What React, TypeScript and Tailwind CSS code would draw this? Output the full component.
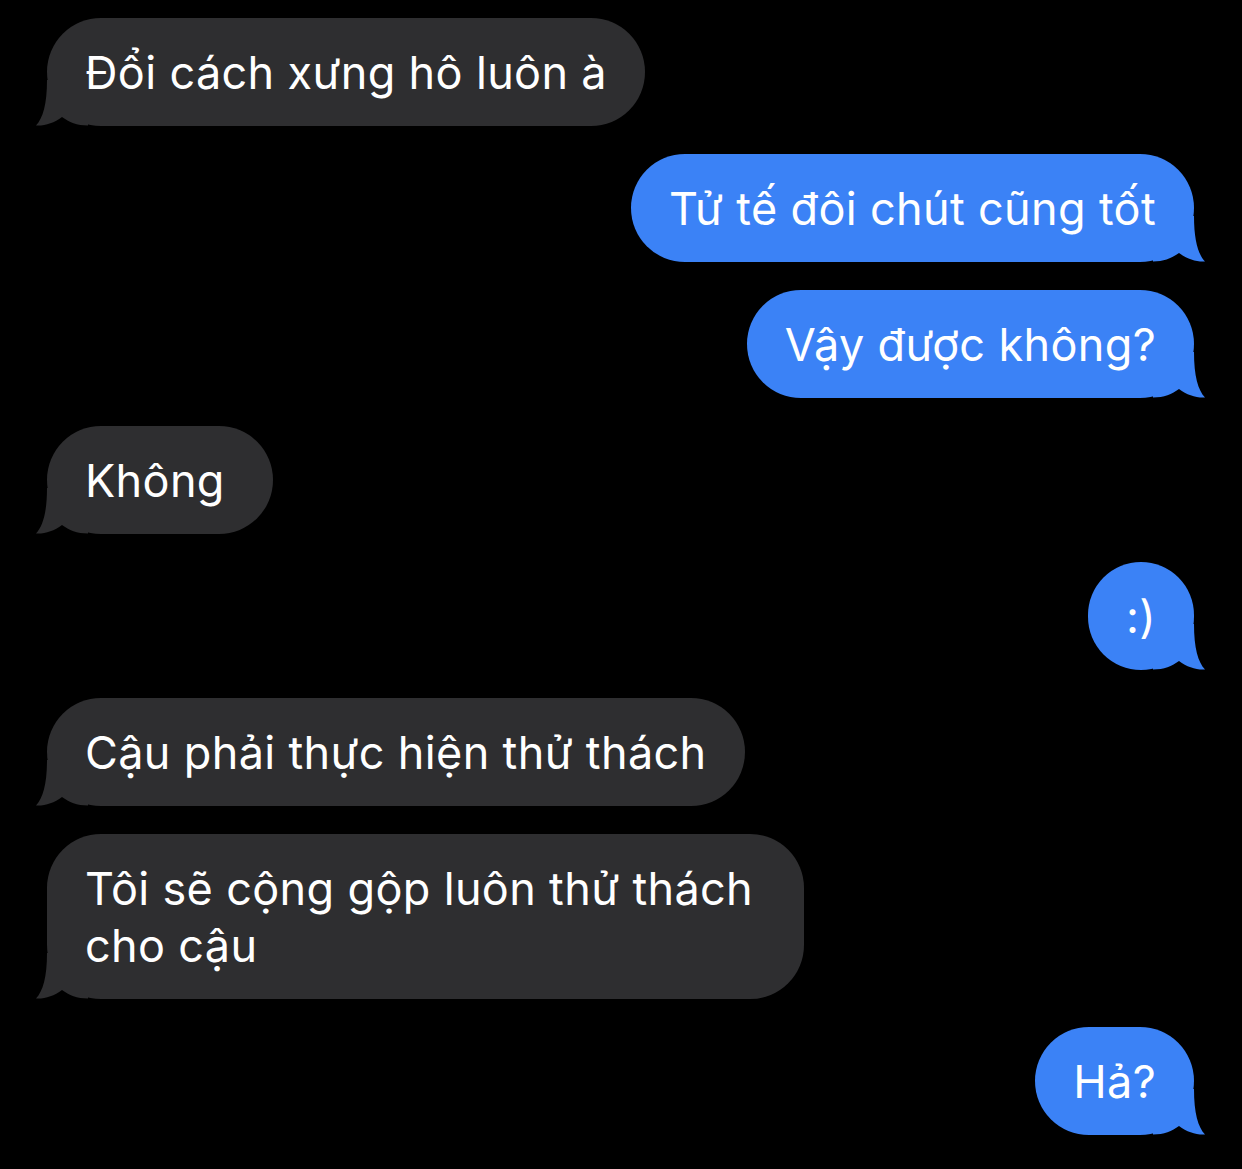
import type { ReactNode } from "react";

type Msg = { from: "them" | "me"; text: ReactNode };

const messages: Msg[] = [
  { from: "them", text: "Đổi cách xưng hô luôn à" },
  { from: "me", text: "Tử tế đôi chút cũng tốt" },
  { from: "me", text: "Vậy được không?" },
  { from: "them", text: "Không" },
  { from: "me", text: ":)" },
  { from: "them", text: "Cậu phải thực hiện thử thách" },
  { from: "them", text: "Tôi sẽ cộng gộp luôn thử thách cho cậu" },
  { from: "me", text: "Hả?" },
];

function Tail({ mine }: { mine: boolean }) {
  return (
    <svg
      viewBox="0 0 52 46"
      className={`absolute bottom-0 h-[46px] w-[52px] ${
        mine ? "right-[-11px] scale-x-[-1]" : "left-[-11px]"
      }`}
    >
      <path
        d="M11 0 C11 24 7 38 0 45.5 C9 46 18 43 26 37 C33 42 41 45.5 52 45.5 L52 0 Z"
        className={mine ? "fill-[#3b82f6]" : "fill-[#2e2e30]"}
      />
    </svg>
  );
}

function Bubble({ msg }: { msg: Msg }) {
  const mine = msg.from === "me";
  return (
    <div className={`flex ${mine ? "justify-end" : "justify-start"}`}>
      <div
        className={`relative max-w-[757px] rounded-[54px] px-[38px] py-[25.5px] text-[45px] leading-[57px] tracking-[0.35px] text-white ${
          mine ? "bg-[#3b82f6]" : "min-w-[226px] bg-[#2e2e30]"
        }`}
      >
        <Tail mine={mine} />
        <span className="relative">{msg.text}</span>
      </div>
    </div>
  );
}

export default function App() {
  return (
    <div
      className="min-h-[1169px] w-full bg-black pt-[18px] pl-[47px] pr-[48px]"
      style={{ fontFamily: "Inter, 'Noto Sans', 'Liberation Sans', sans-serif" }}
    >
      <div className="flex flex-col gap-[28px]">
        {messages.map((m, i) => (
          <Bubble key={i} msg={m} />
        ))}
      </div>
    </div>
  );
}
